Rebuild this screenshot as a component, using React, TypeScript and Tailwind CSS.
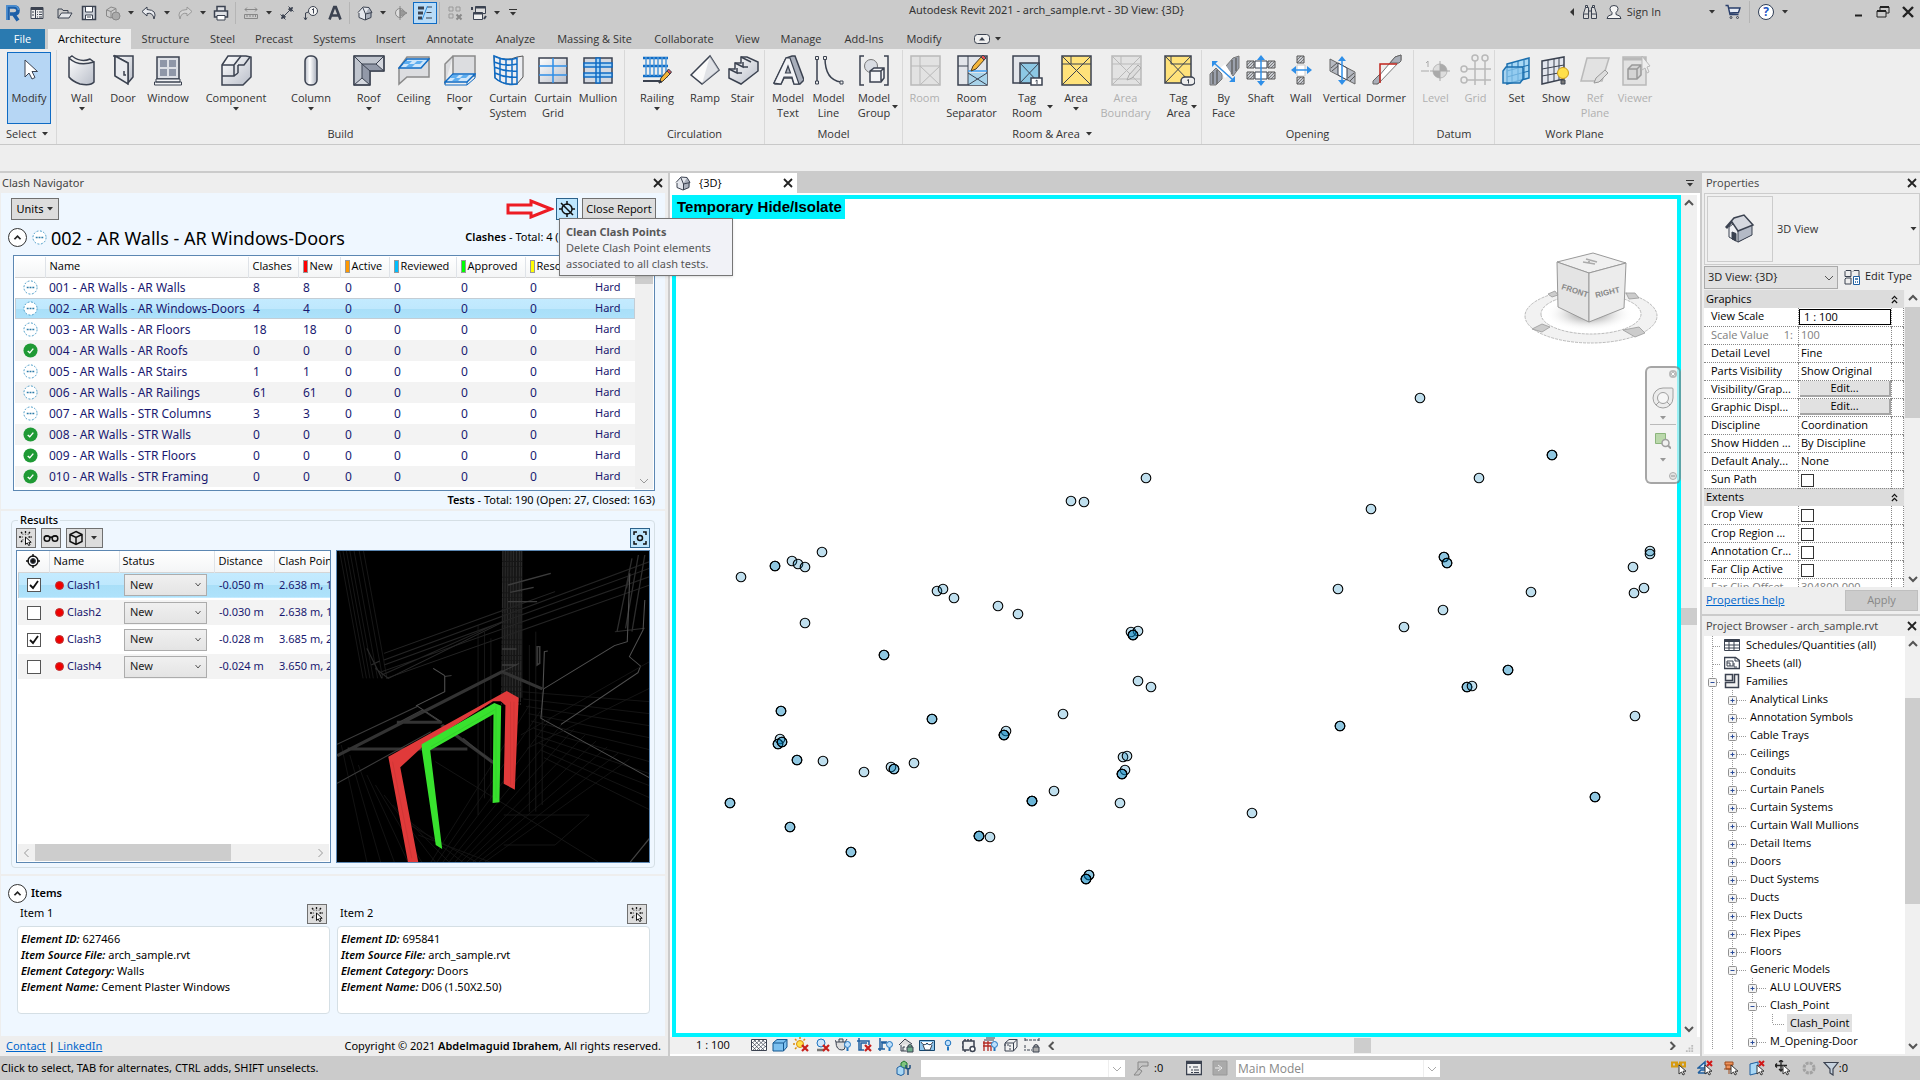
import { ReactNode } from 'react';
import clsx from 'clsx';

const D = '#3b4250';
const B = '#0f6bc4';
const G = '#b9b9b9';

// ---------- shared bits ----------

function Svg({ s = 16, cls, children }: { s?: number; cls?: string; children: ReactNode }) {
  return (
    <svg viewBox={`0 0 ${s} ${s}`} width={s} height={s} fill="none" stroke={D} className={clsx('shrink-0', cls)} aria-hidden="true">
      {children}
    </svg>
  );
}

function Caret({ cls }: { cls?: string }) {
  return (
    <svg viewBox="0 0 6 4" className={clsx('w-[6px] h-1 shrink-0', cls)} aria-hidden="true">
      <path d="M0 0h6L3 3.6z" fill="#333" />
    </svg>
  );
}

const CHEVRONS = { up: 'M1 6l4-4 4 4', down: 'M1 3l4 4 4-4', left: 'M6.500 1l-4 4 4 4', right: 'M3.500 1l4 4-4 4' };

function Chevron({ dir, color = '#555', w = 2 }: { dir: keyof typeof CHEVRONS; color?: string; w?: number }) {
  return (
    <svg viewBox="0 0 10 9" className="w-[10px] h-[9px] shrink-0" fill="none" stroke={color} strokeWidth={w} aria-hidden="true">
      <path d={CHEVRONS[dir]} />
    </svg>
  );
}

function CloseX() {
  return (
    <button aria-label="Close" className="flex items-center justify-center w-4 h-4">
      <svg viewBox="0 0 10 10" className="w-[10px] h-[10px]" stroke="#222" strokeWidth="1.800"><path d="M1 1l8 8M9 1L1 9" /></svg>
    </button>
  );
}

// ---------- title bar ----------

const houseSmall = (
  <>
    <path d="M2 6.500L6 2l6 .5 3 5-1 5-6 2.500-6-2.500z" fill="#e4e7ed" stroke="none" />
    <path d="M8.500 8.500L12 2.500l3 5-1 5-5.500 2.500z" fill="#aab0bc" stroke="none" />
    <path d="M1 7.500L6 2l6 .5 3 5-6.500 1.500L6 3M2 8v4.500l6 2.500 6-2.500V8M8.500 9v6" />
  </>
);

const QAT_ICONS: Record<string, ReactNode> = {
  app: (
    <Svg s={20}>
      <path d="M5 17V4h6q4 0 4 3.500T11 11H7M10.500 11l4.500 6.500" stroke="#1d5fa8" strokeWidth="3.600" />
      <path d="M4 17V3h7q4 0 4.500 4" stroke="#4f93d6" strokeWidth="1.500" />
    </Svg>
  ),
  ui: <Svg><path d="M2 2.500h12v11H2z" fill="#eee" /><path d="M2 4h12" strokeWidth="2" /><path d="M6.500 4v9M8 7h1M10 7h3M8 9.500h1M10 9.500h3M8 12h1M10 12h3M3 7h2M3 10h2" /></Svg>,
  open: <Svg><path d="M1 13V4h4l1 1.500h5V8" /><path d="M1 13l3.500-5H15l-3 5z" fill="#e4e6ea" /></Svg>,
  save: <Svg><path d="M1.500 1.500h13v13h-13z" fill="#cfd3da" strokeWidth="1.500" /><path d="M4.500 2v5h7V2" fill="#fff" /><path d="M4.500 14v-4h7v4" fill="#fff" /><path d="M6 12h4" /></Svg>,
  sync: <Svg><path d="M1.500 5L6 2l5 1.500v6L6 13l-4.500-2zM1.500 5L6 6.500l5-3M6 6.500V13" stroke="#888" fill="#ccc" /><circle cx="11" cy="11" r="4" stroke="#888" fill="#aaa" /></Svg>,
  undo: <Svg><path d="M6 2L1 6.500 6 11V8.500q6-1.500 7 5.500 4-9-7-9.500z" fill="#e9ebef" /></Svg>,
  redo: <Svg><path d="M10 2l5 4.500-5 4.500V8.500Q4 7 3 14q-4-9 7-9.500z" stroke="#999" fill="#d4d4d4" /></Svg>,
  print: <Svg><path d="M4 6V1.500h8V6M1.500 6h13v6h-13z" fill="#dfe1e5" strokeWidth="1.500" /><path d="M4 10.500h8v4.500H4z" fill="#fff" /></Svg>,
  measure: <Svg><path d="M2 4.500h12M4 2.500l-2 2 2 2M12 2.500l2 2-2 2M1.500 9.500h13v4h-13zM4 10v2M7 10v2M10 10v2M12.500 10v2" stroke="#888" /></Svg>,
  dim: <Svg><path d="M3 13L13 3M1.500 9.500l5 5M9.500 1.500l5 5" /><path d="M2.500 13.500l1.500-4 2.500 2.500zM13.500 2.500L9.500 4 12 6.500z" fill={D} /></Svg>,
  tag: <Svg><circle cx="10" cy="6" r="4.500" fill="#f4f4f4" /><path d="M5.500 7l-3 1v6M1 12.500L2.500 15 4 12.500M9 5l1.500-1.500v5" /></Svg>,
  text: <Svg><path d="M2.500 14.500L7.200 2h1.600l4.700 12.500M4.500 10.500h7" strokeWidth="2.600" /></Svg>,
  house: <Svg>{houseSmall}</Svg>,
  section: <Svg><circle cx="7" cy="8" r="4.500" stroke="#888" fill="#ddd" /><path d="M7 1v14M7 4.500l7 3.500-7 3.500z" stroke="#888" fill="#999" /></Svg>,
  thin: <Svg><path d="M1 3h6M1 8h5M1 13h4" strokeWidth="3" /><path d="M10 2h5M9.500 7.500h5M9 13h6" strokeWidth="1" /><path d="M10.500 1L5 15" stroke="#2f8fdf" /></Svg>,
  hidden: <Svg><path d="M2 2h4v4H2zM9 2h4v4H9zM2 9h4v4H2z" stroke="#999" /><path d="M9.500 9.500l5 5M14.500 9.500l-5 5" stroke="#888" strokeWidth="2" /></Svg>,
  windows: <Svg><path d="M4.500 1.500h10v7h-10z" fill="#ddd" /><path d="M4.500 2.500h10" strokeWidth="2" /><path d="M2.500 7.500h9v7h-9z" fill="#eee" /><path d="M2.500 8.500h9M1 5V2M13 14l2-3" strokeWidth="2" /></Svg>,
};

const QAT = ['app', 'ui', '', 'open', 'save', 'sync', 'v', 'undo', 'v', 'redo', 'v', 'print', '|', 'measure', 'v', 'dim', 'tag', 'text', '|', 'house', 'v', 'section', 'thin', '|', 'hidden', 'windows', 'v'];

function TitleBar() {
  return (
    <header className="flex h-[29px] bg-[#cbcbcb]">
      <div className="flex h-6 items-center pl-px pt-px">
        {QAT.map((name, i) => {
          if (name === '') return <span key={i} className="w-1" />;
          if (name === '|') return <span key={i} className="mx-[2px] h-[22px] w-[2px] border-l border-[#b5b5b5]" />;
          if (name === 'v') return <button key={i} aria-label="More" className="flex w-3 justify-center"><Caret cls="w-[5px]" /></button>;
          return (
            <button key={i} aria-label={name} className={clsx('flex h-[22px] w-6 items-center justify-center', name === 'thin' && 'border border-[#0f6bc4] bg-[#b9dcf8]')}>
              {QAT_ICONS[name]}
            </button>
          );
        })}
        <button aria-label="Customize" className="flex w-5 flex-col items-center gap-[2px]">
          <span className="h-px w-2 bg-[#333]" /><Caret cls="w-2" />
        </button>
      </div>
      <h1 className="flex-1 pt-[2px] text-center font-['Noto_Sans',sans-serif] text-[11px] leading-4 text-[#333]">Autodesk Revit 2021 - arch_sample.rvt - 3D View: {'{3D}'}</h1>
      <div className="flex h-6 items-center text-[11px] text-[#333]">
        <svg viewBox="0 0 4 8" className="w-1 h-2 mr-2"><path d="M4 0v8L0 4z" fill="#333" /></svg>
        <button aria-label="Search" className="w-6"><Svg><path d="M1.500 14.500v-5l2-6h3v11zM9.500 14.500v-11h3l2 6v5zM6.500 7h3M3.500 3.500v-2h2v2M10.500 3.500v-2h2v2M1.500 10h5M9.500 10h5" fill="#ddd" /></Svg></button>
        <button className="flex items-center gap-[5px]">
          <Svg><path d="M1 14.500q0-3 5-4V8.500Q4 7 4 4.500 4 1.500 8 1.500t4 3Q12 7 10 8.500v2q5 1 5 4z" fill="#f5f5f5" /></Svg>
          Sign In
        </button>
        <Caret cls="w-[5px] ml-12 mr-[10px]" />
        <button aria-label="Store"><Svg><path d="M3.500 4H15l-1.500 4.500-9 .5z" fill="#e6ebf4" stroke="none" /><path d="M.5 1.500H3l2 9h8.500M3.500 4H15l-1.500 4.500-9 .5" stroke="#2a3f6b" strokeWidth="1.400" /><circle cx="6" cy="13.500" r="1" /><circle cx="12.500" cy="13.500" r="1" /></Svg></button>
        <span className="mx-2 h-[22px] w-px bg-[#b5b5b5]" />
        <button aria-label="Help" className="flex h-4 w-4 items-center justify-center rounded-full border border-[#2f3d55] bg-white text-xs font-bold text-[#1f56c4]">?</button>
        <Caret cls="w-[5px] ml-2" />
        <div className="ml-[66px] flex items-center gap-3 pr-[6px]">
          <button aria-label="Minimize"><Svg s={10}><path d="M1 8.500h7" stroke="#222" strokeWidth="2" /></Svg></button>
          <button aria-label="Restore"><Svg s={14}><path d="M4 5V2h9v6h-3M1 6h9v6H1z" stroke="#222" /><path d="M4 2h9M1 6h9" stroke="#222" strokeWidth="2" /></Svg></button>
          <button aria-label="Exit"><Svg s={12}><path d="M1 1l10 10M11 1L1 11" stroke="#222" strokeWidth="2.400" /></Svg></button>
        </div>
      </div>
    </header>
  );
}

// ---------- ribbon ----------

const TABS: [string, string][] = [
  ['Structure', 'w-[69px]'], ['Steel', 'w-[45px]'], ['Precast', 'w-[58px]'], ['Systems', 'w-[63px]'], ['Insert', 'w-[49px]'],
  ['Annotate', 'w-[70px]'], ['Analyze', 'w-[61px]'], ['Massing & Site', 'w-[97px]'], ['Collaborate', 'w-[82px]'], ['View', 'w-[45px]'],
  ['Manage', 'w-[62px]'], ['Add-Ins', 'w-[64px]'], ['Modify', 'w-[56px]'],
];

const pencil = (
  <>
    <path d="M18 29l2-5 7-8 3 3-8 8z" fill="#f5b63a" stroke="#4a3a20" />
    <path d="M26 17l1.500-2 3 3-1.500 2z" fill="#e05050" /><path d="M18 29l1-3 2 2z" fill="#222" />
  </>
);

const hatch = (x: number, y: number, c = '#555') => (
  <>
    <path d={`M${x} ${y}h7v7h-7z`} fill="#c9ccd2" stroke={c} />
    <path d={`M${x} ${y + 4}l4-4M${x} ${y + 7}l7-7M${x + 3} ${y + 7}l4-4`} stroke={c} strokeWidth=".7" />
  </>
);

const R_ICONS: Record<string, ReactNode> = {
  modify: <path d="M12 6v17l4-4 3 6 3-1.500-3-6h5.500z" fill="#fff" />,
  wall: <path d="M3 4q9 9 25 4v20q-3 4-14 2Q6 27 3 23zM3 4l3-2q9 7 18 3l4 3" fill="url(#steel)" strokeWidth="1.500" />,
  door: <><path d="M6 2h20v21l-5 6V9L8 2v19l13 8" fill="url(#steel)" strokeWidth="1.500" /><path d="M8 2l13 7v21L8 22z" fill="#e9ebef" strokeWidth="1.500" /><path d="M17 17v4h2" strokeWidth="1.500" /></>,
  window: <><path d="M5 3h22v22H5z" fill="#dde0e6" strokeWidth="1.500" /><path d="M8 6h7v7H8zM17 6h7v7h-7zM8 15h7v7H8zM17 15h7v7h-7z" fill="#8f97a8" stroke="none" /><path d="M2.500 28h27v3h-27zM4 25h24v3H4z" fill="#f2f3f6" /></>,
  component: <><path d="M2 11l6-9h18l5 1v20l-8 8H2z" fill="url(#steel)" strokeWidth="1.500" /><path d="M2 22h12V11H2M14 11l7-9M14 22l4-3M18 11h6l6-8M18 11v8" strokeWidth="1.500" /></>,
  column: <rect x="10" y="2" width="12" height="29" rx="5" fill="url(#steelh)" strokeWidth="1.500" />,
  roof: <><path d="M1 2h30v15H17v14H1z" fill="#d5d8df" /><path d="M1 2h30L23 10H9zM9 10v14l-8 7V2z" fill="#c0c5ce" stroke="none" /><path d="M9 10h14l8 7H17v14L9 24z" fill="#9299a8" stroke="none" /><path d="M1 2h30v15H17v14H1z" strokeWidth="1.500" /><path d="M1 2l8 8v14M9 10h14M9 24l-8 7M9 24l8 7M23 10l8-8M23 10l8 7M9 10l8 7" /></>,
  ceiling: <><path d="M9 3h22v20H9L1 30V14z" fill="#dcdde0" stroke="#8a8a8a" strokeWidth="1.500" /><path d="M9 5h22l-8 9H1z" fill="#cfe6fa" stroke={B} strokeWidth="1.500" /><path d="M8 7h6l-3 3H5zM19 7h6l-3 3h-6zM11 10h6l-3 3H8z" fill="#5eaef0" stroke="none" /></>,
  floor: <><path d="M9 2h22v20H9zM9 2L1 10v20" fill="#dcdde0" stroke="#8a8a8a" strokeWidth="1.500" /><path d="M9 20h22l-8 8H1z" fill="#cfe6fa" stroke={B} strokeWidth="1.500" /><path d="M1 28v3h22l8-7v-4M23 28v3" stroke={B} /><path d="M9 21h6l-3 3H6zM19 21h6l-3 3h-6zM11 24h6l-3 3H8z" fill="#5eaef0" stroke="none" /></>,
  curtainSystem: <><path d="M2 2q12 6 23 1l6-1v21l-6 7q-13 2-22-6z" fill="#eceef2" stroke="#555" /><path d="M2 2q12 6 23 2v26q-13 2-22-6zM2 8q12 5 23 2M2 13q12 5 23 4M3 19q10 5 22 4M8 4v23M14 6v23M20 6v24" stroke={B} strokeWidth="1.500" /></>,
  curtainGrid: <><path d="M2 4h28v25H2z" fill="url(#steel)" strokeWidth="1.500" /><path d="M16 4v25M2 12h28M2 21h28" stroke="#2f8fe8" strokeWidth="1.500" /></>,
  mullion: <><path d="M2 4h28v25H2z" fill="#d5d8df" strokeWidth="1.500" /><path d="M2 9h28v4H2zM2 19h28v4H2zM14 4h4v25h-4z" fill="#a5d3f5" stroke={B} strokeWidth="1.500" /></>,
  railing: <><path d="M2 4h25M2 12h25M2 22h25" stroke={B} strokeWidth="2.500" /><path d="M5 3v19M9 3v19M13 3v19M17 3v19M21 3v19M25 3v19" stroke="#4a97dc" strokeWidth="1.500" /><path d="M2 27h17" strokeWidth="2" />{pencil}</>,
  ramp: <><path d="M2 21L21 2l9 14-17 14z" fill="#fafafa" strokeWidth="1.500" /><path d="M21 2l9 14-17 14z" fill="#cfd2d9" fillOpacity=".6" stroke="none" /></>,
  stair: <><path d="M2 15h6v-6h6V3h6l11 5v9L14 30 2 24z" fill="url(#steel)" strokeWidth="1.500" /><path d="M2 15l8 4v-5M8 9l8 4v-5M14 3l10 5M10 19h5M16 13h5" strokeWidth="1.500" /></>,
  modelText: <><path d="M2 29L14 4l6-2h3l9 24-4 4h-6l-2-6h-8l-3 6H3z" fill="#a9afbb" strokeWidth="1.500" /><path d="M2 29L14 4h4l9 26h-5l-2-7h-8l-3 7zM13.500 19h5L16 12z" fill="#f2f3f6" strokeWidth="1.200" /></>,
  modelLine: <><path d="M4 4v24M12 4q0 22 16 24" strokeWidth="1.500" /><path d="M2.500 2.500h3v3h-3zM2.500 27h3v3h-3zM10.500 2.500h3v3h-3zM27 27h3v3h-3z" fill="#eee" /></>,
  modelGroup: <><path d="M6 2H2v29h4M26 2h4v29h-4" strokeWidth="1.500" /><circle cx="13" cy="12" r="6.500" fill="#d9dce2" stroke="#777" /><path d="M12 17l4-3h10v10l-3 4H12zM12 17h11v10M23 17l3-3" fill="#f2f3f6" strokeWidth="1.500" /></>,
  room: <><path d="M2 2h29v29H2z" fill="#e2e2e2" stroke={G} strokeWidth="1.500" /><path d="M11 2v29M2 12h9M11 12h20M11 12l20 19M31 12L11 31" stroke={G} /></>,
  roomSep: <><path d="M2 2h29v29H2z" fill="#e2e5ea" strokeWidth="1.500" /><path d="M12 19h19v12H12z" fill="#a8d3ea" stroke="none" /><path d="M12 2v29M2 12h10M12 19l19 12M31 19L12 31" /><path d="M12 17h19" stroke="#3d9cf0" strokeWidth="1.500" /><path d="M15 17l2-5 9-10 3 3-9 10z" fill="#f5b63a" stroke="#4a3a20" /><path d="M25 3l2-2 3 3-2 2z" fill="#e05050" /></>,
  tagRoom: <><path d="M2 2h26v27H2z" fill="#e2e5ea" strokeWidth="1.500" /><path d="M9 9h19v20H9z" fill="#8cc8e4" strokeWidth="1.500" /><path d="M9 9l19 20M28 9L9 29" /><path d="M20 24h11v7H20z" fill="#fff" strokeWidth="1.500" /><path d="M24.500 27l1.500-1v4" /></>,
  area: <><path d="M2 2h29v29H2z" fill="#ffe27a" strokeWidth="1.500" /><path d="M2 2l29 29M31 2L2 31M2 10h29M11 2v8" /></>,
  areaBoundary: <><path d="M2 2h29v29H2z" fill="#e2e2e2" stroke={G} strokeWidth="1.500" /><path d="M2 2l29 29M31 2L2 31M2 10h29M11 2v8M2 25h29" stroke={G} /><path d="M17 26l2-5 9-10 3 3-9 10z" fill="#ddd" stroke="#aaa" /></>,
  tagArea: <><path d="M2 2h26v27H2z" fill="#ffe27a" strokeWidth="1.500" /><path d="M2 2l26 27M28 2L2 29M8 2v8h20" /><rect x="18" y="23" width="14" height="8" rx="4" fill="#eee" strokeWidth="1.500" /><path d="M24 26.500l1.500-1v4" /></>,
  byFace: <><path d="M18 12L25 4l6-2v12l-6 8zM2 20l6-6 6 6v5L8 31H2z" fill="#9ba1ad" stroke="#777" /><path d="M5 18v12M9 16v14M24 6v14M28 4v13" stroke="#666" strokeWidth="1.500" /><path d="M11 15l6-5 6 9-6 5z" fill="#fff" stroke="none" /><path d="M5 8l20 18" stroke="#2f8fe8" strokeWidth="1.500" /><path d="M4 7h6l-6 6zM27 28v-6l-6 6z" fill="#2f8fe8" stroke="none" /></>,
  shaft: <><path d="M10 7h12v7H10zM10 18h12v7H10z" fill="#fff" />{hatch(2, 7)}{hatch(23, 7)}{hatch(2, 18)}{hatch(23, 18)}<path d="M16 3v27" stroke="#2f8fe8" strokeWidth="1.500" /><path d="M16 1l4 5h-8zM16 32l4-5h-8z" fill="#2f8fe8" stroke="none" /></>,
  openWall: <><path d="M12 11h8v11h-8z" fill="#fff" stroke="#ccc" />{hatch(12, 2)}{hatch(12, 23)}<path d="M8 16h17" stroke="#2f8fe8" strokeWidth="1.500" /><path d="M6 16l5-4v8zM27 16l-5-4v8z" fill="#2f8fe8" stroke="none" /></>,
  vertical: <><path d="M4 5l25 13v12L4 17z" fill="#b5b9c1" stroke="#666" /><path d="M12 9l9 5v12l-9-5z" fill="#fff" /><path d="M5 14l6-5M6 17l6-5M22 24l6-5M24 27l5-5" stroke="#555" /><path d="M16 4v24" stroke="#2f8fe8" strokeWidth="1.500" /><path d="M16 2l4 5h-8zM16 31l4-5h-8z" fill="#2f8fe8" stroke="none" /></>,
  dormer: <><path d="M3 29L25 3l6-2v5L8 30z" fill="#fff" stroke="#777" /><path d="M25 3l6-2v6l-2 2h-9zM3 27l7-7v8l-3 2H3z" fill="#a9aeb8" stroke="#666" /><path d="M10 29V10h17" stroke="#c0241c" strokeWidth="1.500" /></>,
  level: <><circle cx="20" cy="17" r="7" fill="#ddd" stroke={G} /><path d="M20 17v-7a7 7 0 0 1 7 7zM20 17v7a7 7 0 0 1-7-7z" fill="#aaa" stroke="none" /><path d="M1 17h8M20 7v20M10 17h20M6 9l2-2v6" stroke="#aaa" /></>,
  grid: <g stroke={G} strokeWidth="1.500"><circle cx="4" cy="15" r="3" /><circle cx="4" cy="26" r="3" /><circle cx="15" cy="4" r="3" /><circle cx="25" cy="4" r="3" /><path d="M7 15h24M7 26h24M15 7v24M25 7v24" /></g>,
  set: <><path d="M6 10L28 4v20L6 30z" fill="#a9d8f5" stroke="#1b6fae" strokeWidth="1.500" /><path d="M11 9v20M17 7v20M23 6v20M6 17l22-6M6 23l22-6" stroke="#1b6fae" /><path d="M2 17l3-4h16l1 1v11l-3 4H2z" fill="#8cc8ee" fillOpacity=".7" stroke="#1b6fae" strokeWidth="1.500" /></>,
  show: <><path d="M2 7l22-4v22L2 30z" fill="#e3e6ee" strokeWidth="1.500" /><path d="M8 6v23M14 5v22M19 4v22M2 15l22-4M2 22l22-4" /><circle cx="23" cy="19" r="5.500" fill="#ffe04a" stroke="#c99a1a" /><path d="M21 26h4v4h-4z" fill="#777" /></>,
  refPlane: <><path d="M8 4h22l-7 23H2z" fill="#e2e2e2" stroke={G} strokeWidth="1.500" /><path d="M15 29l2-5 9-8 3 3-9 9z" fill="#ddd" stroke="#999" /></>,
  viewer: <><path d="M4 3h23v28H4z" fill="#e2e2e2" stroke={G} strokeWidth="1.500" /><path d="M4 5h23" stroke={G} strokeWidth="3" /><path d="M9 15l4-4h9v10l-4 4H9zM9 15h9v10M18 15l4-4" stroke="#999" fill="#d4d4d4" strokeWidth="1.500" /><path d="M23 2v14l3-2 2 5 2-1-2-5 3-1z" fill="#eee" stroke={G} /></>,
};

interface Tool { icon: string; label: string; w: string; menu?: 'below' | 'side'; off?: boolean }
interface Group { label: string; tools: Tool[]; more?: boolean }

const GROUPS: Group[] = [
  { label: 'Build', tools: [
    { icon: 'wall', label: 'Wall', w: 'w-[50px]', menu: 'below' },
    { icon: 'door', label: 'Door', w: 'w-[32px]' },
    { icon: 'window', label: 'Window', w: 'w-[58px]' },
    { icon: 'component', label: 'Component', w: 'w-[78px]', menu: 'below' },
    { icon: 'column', label: 'Column', w: 'w-[72px]', menu: 'below' },
    { icon: 'roof', label: 'Roof', w: 'w-[43px]', menu: 'below' },
    { icon: 'ceiling', label: 'Ceiling', w: 'w-[47px]' },
    { icon: 'floor', label: 'Floor', w: 'w-[45px]', menu: 'below' },
    { icon: 'curtainSystem', label: 'Curtain\nSystem', w: 'w-[52px]' },
    { icon: 'curtainGrid', label: 'Curtain\nGrid', w: 'w-[38px]' },
    { icon: 'mullion', label: 'Mullion', w: 'w-[52px]' },
  ] },
  { label: 'Circulation', tools: [
    { icon: 'railing', label: 'Railing', w: 'w-[64px]', menu: 'below' },
    { icon: 'ramp', label: 'Ramp', w: 'w-[32px]' },
    { icon: 'stair', label: 'Stair', w: 'w-[43px]' },
  ] },
  { label: 'Model', tools: [
    { icon: 'modelText', label: 'Model\nText', w: 'w-[46px]' },
    { icon: 'modelLine', label: 'Model\nLine', w: 'w-[35px]' },
    { icon: 'modelGroup', label: 'Model\nGroup', w: 'w-[56px]', menu: 'side' },
  ] },
  { label: 'Room & Area', more: true, tools: [
    { icon: 'room', label: 'Room', w: 'w-[43px]', off: true },
    { icon: 'roomSep', label: 'Room\nSeparator', w: 'w-[51px]' },
    { icon: 'tagRoom', label: 'Tag\nRoom', w: 'w-[60px]', menu: 'side' },
    { icon: 'area', label: 'Area', w: 'w-[38px]', menu: 'below' },
    { icon: 'areaBoundary', label: 'Area\nBoundary', w: 'w-[61px]', off: true },
    { icon: 'tagArea', label: 'Tag\nArea', w: 'w-[45px]', menu: 'side' },
  ] },
  { label: 'Opening', tools: [
    { icon: 'byFace', label: 'By\nFace', w: 'w-[43px]' },
    { icon: 'shaft', label: 'Shaft', w: 'w-[32px]' },
    { icon: 'openWall', label: 'Wall', w: 'w-[48px]' },
    { icon: 'vertical', label: 'Vertical', w: 'w-[34px]' },
    { icon: 'dormer', label: 'Dormer', w: 'w-[54px]' },
  ] },
  { label: 'Datum', tools: [
    { icon: 'level', label: 'Level', w: 'w-[43px]', off: true },
    { icon: 'grid', label: 'Grid', w: 'w-[37px]', off: true },
  ] },
  { label: 'Work Plane', tools: [
    { icon: 'set', label: 'Set', w: 'w-[43px]' },
    { icon: 'show', label: 'Show', w: 'w-[36px]' },
    { icon: 'refPlane', label: 'Ref\nPlane', w: 'w-[42px]', off: true },
    { icon: 'viewer', label: 'Viewer', w: 'w-[38px]', off: true },
  ] },
];

function RibbonTool({ icon, label, w, menu, off }: Tool) {
  return (
    <button disabled={off} className={clsx('relative flex h-[72px] flex-col items-center pt-[2px]', w, off ? 'text-[#b0b0b0]' : 'text-[#333]')}>
      <Svg s={32}>{R_ICONS[icon]}</Svg>
      <span className="mt-1 whitespace-pre text-center text-[11px] leading-[15px]">{label}</span>
      {menu === 'below' && <Caret cls="w-[5px] mt-[2px]" />}
      {menu === 'side' && <Caret cls="w-[5px] absolute right-1 top-[53px]" />}
    </button>
  );
}

function Ribbon() {
  return (
    <>
      <nav className="flex h-5 bg-[#cbcbcb] text-[11px] leading-5 text-[#333]">
        <button className="w-[45px] bg-[#2a7ab0] text-white">File</button>
        <button className="ml-[3px] w-[83px] bg-[#eee] text-black">Architecture</button>
        {TABS.map(([label, w]) => <button key={label} className={clsx('whitespace-nowrap', w)}>{label}</button>)}
        <button aria-label="Ribbon display" className="ml-[22px] flex items-center gap-[5px]">
          <svg viewBox="0 0 16 10" className="w-4 h-[10px]"><rect x=".5" y=".5" width="15" height="9" rx="3" fill="#eee" stroke={D} /><path d="M5 6.500h6L8 3z" fill={D} /></svg>
          <Caret />
        </button>
      </nav>
      <div className="flex h-24 border-b border-[#c8c8c8] bg-[#eee] pt-px">
        <div className="flex w-[57px] flex-col border-r border-[#d8d8d8]">
          <button className="ml-[7px] mt-[2px] flex h-[72px] w-[44px] flex-col items-center border border-[#0f6bc4] bg-[#b6d6f4] text-[11px] leading-[15px] text-[#333]">
            <Svg s={32} cls="mt-px">{R_ICONS.modify}</Svg>
            <span className="mt-1">Modify</span>
          </button>
          <button className="mt-px flex items-center gap-[6px] pl-[6px] text-[11px] leading-[17px] text-[#333]">Select <Caret cls="w-2" /></button>
        </div>
        {GROUPS.map(g => (
          <section key={g.label} className="flex flex-col border-r border-[#d8d8d8] last:border-0">
            <div className="flex h-[75px] pt-[2px]">{g.tools.map(t => <RibbonTool key={t.label} {...t} />)}</div>
            <h2 className="flex items-center justify-center gap-[6px] text-[11px] leading-[17px] text-[#333]">{g.label}{g.more && <Caret cls="w-2" />}</h2>
          </section>
        ))}
      </div>
      <div className="h-[28px] border-b-2 border-[#cbcbcb] bg-[#eee]" />
    </>
  );
}

// ---------- clash navigator ----------

interface Test { name: string; clashes: number; done?: boolean; selected?: boolean }

const TESTS: Test[] = [
  { name: '001 - AR Walls - AR Walls', clashes: 8 },
  { name: '002 - AR Walls - AR Windows-Doors', clashes: 4, selected: true },
  { name: '003 - AR Walls - AR Floors', clashes: 18 },
  { name: '004 - AR Walls - AR Roofs', clashes: 0, done: true },
  { name: '005 - AR Walls - AR Stairs', clashes: 1 },
  { name: '006 - AR Walls - AR Railings', clashes: 61 },
  { name: '007 - AR Walls - STR Columns', clashes: 3 },
  { name: '008 - AR Walls - STR Walls', clashes: 0, done: true },
  { name: '009 - AR Walls - STR Floors', clashes: 0, done: true },
  { name: '010 - AR Walls - STR Framing', clashes: 0, done: true },
];

const STATUS_COLS: [string, string, string][] = [
  ['New', 'bg-[#ff0000]', 'w-[42px]'],
  ['Active', 'bg-[#ff9900]', 'w-[49px]'],
  ['Reviewed', 'bg-[#00bfff]', 'w-[67px]'],
  ['Approved', 'bg-[#00ff00]', 'w-[69px]'],
  ['Resolved', 'bg-[#ffff00]', 'w-[66px]'],
];

const RESULTS = [
  { name: 'Clash1', distance: '-0.050 m', point: '2.638 m, 1', on: true, selected: true },
  { name: 'Clash2', distance: '-0.030 m', point: '2.638 m, 1', on: false },
  { name: 'Clash3', distance: '-0.028 m', point: '3.685 m, 2', on: true },
  { name: 'Clash4', distance: '-0.024 m', point: '3.650 m, 2', on: false },
];

const SELECTED_ROW = 'bg-[linear-gradient(#c4ebff_0%,#bfe8fd_50%,#a9dff8_51%,#aee2fb_100%)] shadow-[inset_0_0_0_1px_#c3cdd5]';
const GRAY_BTN = 'flex items-center justify-center border border-[#707070] bg-[#ddd]';
const BLUE_BTN = 'flex items-center justify-center border border-[#2c628b] bg-[#bee6fd]';

function StatusDot({ done }: { done?: boolean }) {
  return (
    <svg viewBox="0 0 16 16" className="w-[15px] h-[15px]" fill="none" aria-hidden="true">
      {done ? (
        <><circle cx="8" cy="8" r="7.500" fill="#1f9a35" /><path d="M5 8.500l2.200 2L11 6" stroke="#fff" strokeWidth="1.500" /></>
      ) : (
        <><circle cx="8" cy="8" r="7" fill="#fff" stroke="#3c93c2" strokeDasharray="2 1.700" /><path d="M4 8h2M7 8h2M10 8h2" stroke="#2c7ba8" strokeWidth="1.400" /></>
      )}
    </svg>
  );
}

function Expander() {
  return (
    <button aria-label="Collapse" className="flex h-[19px] w-[19px] items-center justify-center rounded-full border border-[#333] bg-white">
      <svg viewBox="0 0 10 8" className="w-[9px] h-[7px]" fill="none" stroke="#222" strokeWidth="2"><path d="M1.500 6L5 2.500 8.500 6" /></svg>
    </button>
  );
}

function PickIcon() {
  return (
    <Svg><path d="M7.500 7v7.500l1.800-1.600 1.300 2.600 1.500-.7-1.300-2.500h2.400z" fill="#fff" stroke="#111" /><path d="M7.500 1v3.500M3 2l2.200 2.500M1 7h3.500M12 2L9.800 4.500M10.500 7H14M3 12l2.200-2.500" stroke="#111" strokeWidth="1.300" strokeDasharray="2 .8" /></Svg>
  );
}

function TestsTable() {
  return (
    <div className="ml-3 mr-[10px] flex h-[236px] border border-[#5c87b2] bg-white p-px">
      <table className="w-[621px] table-fixed self-start border-collapse text-xs">
        <thead className="bg-linear-to-b from-white to-[#f4f5f6] font-['Open_Sans',sans-serif] text-[11px]">
          <tr className="h-[20px] border-b border-[#d5d5d5] text-left text-black">
            <th className="w-[30px]"></th>
            <th className="w-[203px] border-x border-[#dfe3e8] pl-1 font-normal">Name</th>
            <th className="w-[50px] border-r border-[#dfe3e8] pl-1 font-normal">Clashes</th>
            {STATUS_COLS.map(([label, color, w]) => (
              <th key={label} className={clsx('border-r border-[#dfe3e8] pl-1 font-normal', w)}>
                <span className="flex items-center gap-[2px]"><i className={clsx('h-[13px] w-[5px] border border-[#999]', color)} />{label}</span>
              </th>
            ))}
            <th className="w-[44px] pl-1 font-normal">Type</th>
          </tr>
        </thead>
        <tbody className="text-[#191970]">
          {TESTS.map((t, i) => (
            <tr key={t.name} className={clsx('h-[21px]', t.selected ? SELECTED_ROW : i % 2 ? 'bg-[#f3f3f3]' : 'bg-white')}>
              <td className="p-0 pl-2"><StatusDot done={t.done} /></td>
              <td className="whitespace-nowrap p-0 pl-1">{t.name}</td>
              <td className="p-0 pl-[5px]">{t.clashes}</td>
              <td className="p-0 pl-[5px]">{t.clashes}</td>
              <td className="p-0 pl-[5px]">0</td>
              <td className="p-0 pl-[5px]">0</td>
              <td className="p-0 pl-[5px]">0</td>
              <td className="p-0 pl-[5px]">0</td>
              <td className="p-0 pl-1 text-[11px]">Hard</td>
            </tr>
          ))}
        </tbody>
      </table>
      <div className="ml-auto flex w-[18px] flex-col items-center justify-between bg-[#f0f0f0] pb-1">
        <span className="h-[27px] w-full bg-[#cdcdcd]" />
        <Chevron dir="down" color="#999" w={1} />
      </div>
    </div>
  );
}

function ResultsList() {
  return (
    <div className="flex flex-1 flex-col overflow-hidden border border-[#5c87b2] bg-white pb-px">
      <div className="flex-1 overflow-hidden pl-px">
        <table className="w-[355px] table-fixed border-collapse text-[11px]">
          <thead className="bg-linear-to-b from-white to-[#f4f5f6] font-['Open_Sans',sans-serif]">
            <tr className="h-[21px] border-b border-[#d5d5d5] text-left text-black">
              <th className="w-[31px] pl-[7px]">
                <Svg><circle cx="8" cy="8" r="5" stroke="#111" strokeWidth="1.400" /><circle cx="8" cy="8" r="2.500" fill="#111" /><path d="M8 1v3M8 12v3M1 8h3M12 8h3" stroke="#111" strokeWidth="1.400" /></Svg>
              </th>
              <th className="w-[70px] border-x border-[#dfe3e8] pl-1 font-normal">Name</th>
              <th className="w-[95px] border-r border-[#dfe3e8] pl-[3px] font-normal">Status</th>
              <th className="w-[60px] border-r border-[#dfe3e8] pl-1 font-normal">Distance</th>
              <th className="pl-1 font-normal">Clash Point</th>
            </tr>
          </thead>
          <tbody className="text-[#191970]">
            {RESULTS.map((r, i) => (
              <tr key={r.name} className={clsx('h-[27px] border-b-2 border-white', r.selected ? SELECTED_ROW : i % 2 ? 'bg-[#f3f3f3]' : 'bg-white')}>
                <td className="pl-[9px]">
                  <label className="relative block h-[14px] w-[14px]">
                    <input type="checkbox" defaultChecked={r.on} aria-label={`Show ${r.name}`} className="peer block h-[14px] w-[14px] appearance-none border border-[#555] bg-white" />
                    <svg viewBox="0 0 14 14" className="pointer-events-none absolute inset-0 hidden peer-checked:block" fill="none" stroke="#111" strokeWidth="1.800"><path d="M3 7l3 3 5-7" /></svg>
                  </label>
                </td>
                <td className="pl-[6px]"><span className="flex items-center gap-[3px]"><i className="h-[9px] w-[9px] rounded-full border border-[#b33] bg-[#f00000]" />{r.name}</span></td>
                <td className="pl-[5px]">
                  <span className="relative block w-[83px]">
                    <select aria-label={`Status of ${r.name}`} className="block h-[22px] w-full appearance-none border border-[#acacac] bg-linear-to-b from-[#f0f0f0] to-[#e4e4e4] pl-[5px] text-[11px] text-[#222]"><option>New</option></select>
                    <svg viewBox="0 0 6 5" className="absolute right-[6px] top-2 w-[6px] h-[5px]" fill="none" stroke="#555"><path d="M.5 1L3 4l2.500-3" /></svg>
                  </span>
                </td>
                <td className="whitespace-nowrap pl-[5px]">{r.distance}</td>
                <td className="whitespace-nowrap pl-[5px]">{r.point}</td>
              </tr>
            ))}
          </tbody>
        </table>
      </div>
      <div className="mx-px flex h-[17px] items-center bg-[#f0f0f0]">
        <span className="flex w-[17px] justify-center"><Chevron dir="left" color="#999" w={1} /></span>
        <span className="h-full w-[196px] bg-[#cdcdcd]" />
        <span className="ml-auto flex w-[17px] justify-center"><Chevron dir="right" color="#999" w={1} /></span>
      </div>
    </div>
  );
}

// Wireframe preview of the selected clash
function ClashPreview() {
  const columns = [1178, 1184, 1190, 1197, 1203, 1210, 1217, 1222];
  const frames = [796, 804, 812, 820, 830, 842, 852];
  const fan = [0, 1, 2, 3, 4, 5, 6, 7, 8, 9];
  return (
    <svg viewBox="790 138 731 933" preserveAspectRatio="none" className="h-full w-full bg-black" fill="none" role="img" aria-label="Clash preview">
      <path d="M1176 138h48v440h-48z" fill="#161616" />
      {columns.map(x => <path key={x} d={`M${x} 138L${x - 3} 600`} stroke="#323232" strokeWidth="2" strokeDasharray="30 3 12 2" />)}
      {frames.map(x => <path key={x} d={`M${x} 138L${x + 55} 520`} stroke="#1e1e1e" strokeWidth="2" />)}
      {fan.map(i => <path key={i} d={`M${800 + i * 20} ${720 + i * 30}l${60 + i * 12} ${351 - i * 30}`} stroke="#181818" strokeWidth="2" />)}
      {fan.map(i => <path key={i} d={`M${1010 + i * 14} 1071L${1240 + i * 26} ${600 + i * 18}`} stroke="#181818" strokeWidth="2" />)}
      {fan.map(i => <path key={i} d={`M${1220 + i * 6} ${560 + i * 22}L1521 ${590 + i * 36}`} stroke="#1a1a1a" strokeWidth="2" />)}
      <path d="M900 480L1521 190M895 500L1521 215M905 520L1521 240M900 445L1300 260M895 510L1176 350M900 465L1521 170" stroke="#242424" strokeWidth="3" />
      <path d="M880 490l30 30 270-170M870 480l20-12M860 430l35 90" stroke="#2a2a2a" strokeWidth="3" />
      <path d="M1190 290h68M1195 262l55-15M1190 240l100-35M1176 432h34M1176 480h34M1258 425v55l6-5v-50z" stroke="#3c3c3c" strokeWidth="4" />
      <path d="M1120 360v570M1135 380v500M1150 400v490M1240 420v500M1255 380v540M1270 560v340" stroke="#1e1e1e" strokeWidth="2" />
      <path d="M1480 160l-35 220M1495 150l-30 220M1510 150l-30 230M1440 380l70-10M1475 210l-8 40" stroke="#2e2e2e" strokeWidth="3" />
      <path d="M1510 285l-4 90-32 80 26 28-6 20-180 155M1475 205l-6 205-30 12-166 130-6 88 254 178M1283 438l-8 2-3 110M1015 490l27 22M1058 512l-16 2v46l-66 42 60 50" stroke="#505050" strokeWidth="2.500" />
      <path d="M790 752L1176 500l95 52M815 732h280M930 652h105M1035 660l120 112" stroke="#333" strokeWidth="9" />
      <path d="M790 835L1010 680M790 718l190-115M1085 700l70 75M930 655l60-40 40 35M1176 500l40-25" stroke="#3c3c3c" strokeWidth="3" />
      <path d="M1220 690L1521 470M1235 730l286-180M1180 930h200l-80 90h-120M1020 770l380 300" stroke="#1a1a1a" strokeWidth="2" />
      <path d="M1521 1000l-45 71" stroke="#444" strokeWidth="3" />
      <path d="M910 755L1187 558l28 20-9 276-26-18 4-235-11-12-18 0-160 130-57 68 42 284h-24z" fill="#e03a3a" />
      <path d="M988 718L1158 594l16 8-4 290-16 2 2-266-148 108 28 296-15-12-32-280z" fill="#38e22e" />
      <path d="M1196 590v250M1204 590v250M920 770l45 290M1162 600v280M1010 725l150-112" stroke="#000" strokeOpacity=".18" />
    </svg>
  );
}

const ITEMS = [
  { title: 'Item 1', rows: [['Element ID:', '627466'], ['Item Source File:', 'arch_sample.rvt'], ['Element Category:', 'Walls'], ['Element Name:', 'Cement Plaster Windows']] },
  { title: 'Item 2', rows: [['Element ID:', '695841'], ['Item Source File:', 'arch_sample.rvt'], ['Element Category:', 'Doors'], ['Element Name:', 'D06 (1.50X2.50)']] },
];

function ClashNavigator() {
  return (
    <aside className="flex w-[670px] shrink-0 flex-col border-r-2 border-[#cbcbcb] bg-[#eee] font-['Noto_Sans',sans-serif] text-[11px] text-black">
      <div className="flex h-5 shrink-0 items-center justify-between pl-[2px] pr-[2px] text-[#444]">
        <h2>Clash Navigator</h2>
        <CloseX />
      </div>
      <div className="ml-px mr-[3px] flex flex-1 flex-col bg-[#eff7ff]">
        <div className="flex pl-[10px] pr-[9px] pt-[5px]">
          <button className={clsx(GRAY_BTN, 'h-[22px] w-12 gap-1')}>Units <Caret cls="w-2" /></button>
          <svg viewBox="0 0 48 20" className="ml-auto mr-[2px] h-5 w-12 self-center" fill="none" stroke="#ed1c24" strokeWidth="3"><path d="M2 6h23V2l20 8-20 8v-4H2z" /></svg>
          <div className="relative">
            <button aria-label="Clean Clash Points" className={clsx(BLUE_BTN, 'h-[22px] w-[22px]')}>
              <Svg><circle cx="8" cy="8" r="5" stroke="#111" strokeWidth="1.500" /><path d="M8 0v4M8 12v4M0 8h3M13 8h3M2 2l12 12" stroke="#111" strokeWidth="1.500" /></Svg>
            </button>
            <div role="tooltip" className="absolute left-[3px] top-5 z-20 h-[58px] w-[174px] border border-[#767676] bg-[#f1f2f7] px-[6px] pt-[5px] leading-4 text-[#575757] shadow-sm">
              <p className="font-bold">Clean Clash Points</p>
              <p className="whitespace-nowrap">Delete Clash Point elements</p>
              <p className="whitespace-nowrap">associated to all clash tests.</p>
            </div>
          </div>
          <button className={clsx(GRAY_BTN, "ml-1 h-[22px] w-[74px] whitespace-nowrap font-['Open_Sans',sans-serif]")}>Close Report</button>
        </div>
        <div className="flex h-[35px] items-center pl-[7px] pr-[10px]">
          <Expander />
          <span className="ml-[5px]"><StatusDot /></span>
          <h3 className="ml-1 whitespace-nowrap text-lg">002 - AR Walls - AR Windows-Doors</h3>
          <p className="ml-auto whitespace-nowrap"><span className="font-semibold">Clashes</span> - Total: 4 (Open: 4, Closed: 0)</p>
        </div>
        <TestsTable />
        <p className="h-[18px] pr-[10px] text-right leading-[18px]"><span className="font-semibold">Tests</span> - Total: 190 (Open: 27, Closed: 163)</p>
        <div className="h-[2px] bg-[#eee]" />
        <fieldset className="mx-[10px] mt-px flex flex-1 flex-col rounded-sm border border-[#d5dfe5] px-1 pb-1">
          <legend className="ml-[2px] px-[2px] font-medium leading-4">Results</legend>
          <div className="flex gap-[5px]">
            <button aria-label="Pick" className={clsx(GRAY_BTN, 'h-5 w-5')}><PickIcon /></button>
            <button aria-label="Inspect" className={clsx(GRAY_BTN, 'h-5 w-5')}>
              <Svg><circle cx="4" cy="8.500" r="2.800" stroke="#111" strokeWidth="1.500" /><circle cx="12" cy="8.500" r="2.800" stroke="#111" strokeWidth="1.500" /><path d="M1 7q3-2 7 .5Q12 5 15 7" stroke="#111" strokeWidth="1.500" /></Svg>
            </button>
            <span className="flex">
              <button aria-label="Box view" className={clsx(GRAY_BTN, 'h-5 w-5')}>
                <Svg><path d="M8 1.500l6 3v7l-6 3-6-3v-7zM2 4.500l6 3 6-3M8 7.500v7" stroke="#111" strokeWidth="1.500" /></Svg>
              </button>
              <button aria-label="Box options" className={clsx(GRAY_BTN, '-ml-px h-5 w-[18px]')}><Caret cls="w-2" /></button>
            </span>
            <button aria-label="Zoom to clash" className={clsx(BLUE_BTN, 'ml-auto h-5 w-5')}>
              <Svg><path d="M2 5V2h3M11 2h3v3M14 11v3h-3M5 14H2v-3" stroke="#111" strokeWidth="1.500" /><circle cx="8" cy="8" r="2.500" stroke="#111" strokeWidth="1.500" /></Svg>
            </button>
          </div>
          <div className="mt-[2px] flex flex-1 gap-[5px]">
            <ResultsList />
            <div className="relative flex-1 border border-[#5c87b2]">
              <div className="absolute inset-0"><ClashPreview /></div>
            </div>
          </div>
        </fieldset>
        <div className="mt-[6px] border-t-2 border-[#eee] pl-[7px] pt-2">
          <div className="flex items-center gap-1"><Expander /><h3 className="font-semibold">Items</h3></div>
        </div>
        <div className="mb-[22px] flex gap-[7px] pl-4 pr-[15px]">
          {ITEMS.map(item => (
            <section key={item.title} className="flex-1">
              <div className="flex h-[23px] items-center justify-between pb-[2px] pl-[3px] pr-[3px]">
                <h4>{item.title}</h4>
                <button aria-label={`Pick ${item.title}`} className={clsx(GRAY_BTN, 'h-5 w-5')}><PickIcon /></button>
              </div>
              <div className="h-[88px] rounded-sm border border-[#d5dfe5] bg-white px-[3px] pt-1 leading-4">
                {item.rows.map(([k, v]) => <p key={k}><span className="font-semibold italic">{k}</span> {v}</p>)}
              </div>
            </section>
          ))}
        </div>
      </div>
      <footer className="flex h-5 shrink-0 items-center justify-between pl-[6px] pr-[7px]">
        <p><a href="#contact" className="text-[#0066cc] underline">Contact</a> | <a href="#linkedin" className="text-[#0066cc] underline">LinkedIn</a></p>
        <p>Copyright © 2021 <span className="font-semibold">Abdelmaguid Ibrahem</span>, All rights reserved.</p>
      </footer>
    </aside>
  );
}

// ---------- 3D view ----------

// x, y, number of coincident points
const POINTS: [number, number, number][] = [
  [1146, 478, 1], [1071, 501, 1], [1084, 502, 1], [822, 552, 1], [775, 566, 2], [792, 561, 1], [798, 564, 1], [805, 567, 1],
  [741, 577, 1], [937, 591, 1], [943, 589, 1], [954, 598, 1], [998, 606, 1], [1018, 614, 1], [805, 623, 1], [1131, 632, 1],
  [1138, 631, 1], [1133, 635, 3], [884, 655, 2], [1138, 681, 1], [1151, 687, 1], [781, 711, 2], [932, 719, 2], [1063, 714, 1],
  [1006, 731, 1], [1004, 735, 3], [780, 739, 1], [778, 744, 2], [782, 742, 2], [797, 760, 2], [823, 761, 1], [864, 772, 1],
  [891, 767, 1], [894, 769, 2], [914, 763, 1], [1123, 757, 1], [1127, 756, 1], [1125, 770, 1], [1122, 774, 3], [1054, 791, 1],
  [1032, 801, 3], [1120, 803, 1], [730, 803, 2], [1252, 813, 1], [790, 827, 2], [979, 836, 3], [990, 837, 1], [851, 852, 2],
  [1089, 875, 2], [1086, 879, 3], [1420, 398, 1], [1552, 455, 2], [1479, 478, 1], [1371, 509, 1], [1444, 557, 2], [1447, 563, 2],
  [1650, 551, 1], [1650, 554, 1], [1633, 567, 1], [1338, 589, 1], [1531, 592, 1], [1634, 593, 1], [1644, 588, 1], [1443, 610, 1],
  [1404, 627, 1], [1508, 670, 2], [1467, 687, 2], [1472, 686, 1], [1635, 716, 1], [1340, 726, 2], [1595, 797, 2],
];

function ModelCanvas() {
  return (
    <svg viewBox="676 199 1001 834" preserveAspectRatio="xMinYMin meet" className="absolute inset-0 h-full w-full" role="img" aria-label="Clash points">
      <defs>
        <radialGradient id="cubeShadow"><stop offset="0" stopColor="#777" /><stop offset="1" stopColor="#fff" stopOpacity="0" /></radialGradient>
      </defs>
      {POINTS.flatMap(([x, y, n]) => Array.from({ length: n }, (_, i) => (
        <circle key={`${x}-${y}-${i}`} cx={x} cy={y} r="4.800" fill="#007fbb" fillOpacity=".25" stroke="#000" strokeWidth="1.100" />
      )))}
      <g stroke="#aaa" fill="#f2f2f2" strokeLinejoin="round">
        <path fillRule="evenodd" strokeDasharray="3 1" strokeWidth=".8" d="M1525 316a66 27 0 1 0 132 0a66 27 0 1 0-132 0zM1541 314a50 20 0 1 0 100 0a50 20 0 1 0-100 0z" />
        <ellipse cx="1589" cy="314" rx="44" ry="17" fill="url(#cubeShadow)" stroke="none" />
        <path d="M1557 262l36-9 33 10-37 10z" fill="#f0f0f0" stroke="#999" />
        <path d="M1557 262l32 11v49l-31-15z" fill="#e4e4e4" stroke="#999" />
        <path d="M1589 273l37-10-2 45-35 14z" fill="#ececec" stroke="#999" />
        <path d="M1583 262l12 2M1586 259l11 3M1590 260l-2 3" fill="none" stroke="#aaa" strokeWidth="1.500" />
        <path d="M1532 329l10-5 8 3-8 5zM1623 330l16-3 6 6-10 4zM1548 294l7-3 3 4-6 2zM1626 293l9 0 4 5-10 1z" fill="#ccc" stroke="#999" strokeWidth=".8" />
      </g>
      <text x="1561" y="289" fontSize="8" fontWeight="700" fill="#888" fontFamily="Liberation Sans Narrow, Liberation Sans" transform="rotate(18 1561 289)">FRONT</text>
      <text x="1596" y="298" fontSize="8" fontWeight="700" fill="#888" fontFamily="Liberation Sans Narrow, Liberation Sans" transform="rotate(-14 1596 298)">RIGHT</text>
    </svg>
  );
}

function NavBar() {
  return (
    <div className="absolute right-[-4px] top-[167px] flex h-[118px] w-9 flex-col items-center rounded-md border-2 border-[#0006] bg-[#eeec] opacity-80">
      <button aria-label="Close" className="mr-[2px] mt-[2px] self-end"><Svg s={8}><circle cx="4" cy="4" r="4" fill="#aaa" stroke="none" /><path d="M2.500 2.500l3 3M5.500 2.500l-3 3" stroke="#fff" /></Svg></button>
      <button aria-label="Steering wheel" className="mt-[9px]">
        <Svg s={22}><path d="M11 1h9q1 0 1 1v9A10 10 0 1 1 11 1z" fill="#e8e8e8" stroke="#888" /><circle cx="11" cy="11" r="5.500" fill="#f4f4f4" stroke="#888" /><path d="M15 15l3 3M7 15l-3 3" stroke="#888" /></Svg>
      </button>
      <Caret cls="mt-[7px] opacity-60" />
      <span className="mt-1 h-px w-[26px] bg-[#aaa]" />
      <button aria-label="Zoom region" className="mt-2">
        <Svg><path d="M.5.5h10v10H.5z" fill="#a9cf97" stroke="#6fa35c" /><circle cx="10.500" cy="10" r="3.500" fill="#eee" stroke="#888" strokeWidth="1.500" /><path d="M13 12.500l3 3" stroke="#888" strokeWidth="2" /></Svg>
      </button>
      <Caret cls="mt-[9px] opacity-60" />
      <button aria-label="Options" className="mb-[2px] mr-[2px] mt-auto self-end"><Svg s={8}><circle cx="4" cy="4" r="3.500" fill="#ddd" stroke="#999" /><path d="M2 4h4" stroke="#777" /></Svg></button>
    </div>
  );
}

const redX = <path d="M9 8l6 6M15 8l-6 6" stroke="#c8201c" strokeWidth="2.200" />;
const bulb = <><circle cx="12.500" cy="7.500" r="3" fill="#bfe0fb" stroke="#1f74c0" /><path d="M12.500 11v3" stroke="#1f74c0" strokeWidth="2" /></>;
const cube = <path d="M2 6l4-3.500h8V10l-3.500 4H2zM2 6h8.500v8M10.500 6L14 2.500" />;

const VIEW_ICONS: [string, ReactNode][] = [
  ['Detail level', <><path d="M.5 2.500h15v11H.5z" fill="#fff" /><path d="M1 6l4-3M1 10l8-7M2 13L13 3M6 13l9-8M10 13l5-4M1 9l4 4M1 5l8 8M3 3l10 10M7 3l8 7M11 3l4 3" strokeWidth=".7" /></>],
  ['Visual style', <g fill="#7cc0ef" stroke="#13568f"><path d="M1 6l4-3.500h10V10l-3.500 4H1z" /><path d="M1 6h10.500v8M11.500 6L15 2.500" /></g>],
  ['Sun path', <><circle cx="7" cy="7" r="3.500" fill="#ffe04a" stroke="#d98c10" /><path d="M7 0v2M0 7h2M2 2l1.500 1.500M12 2l-1.500 1.500M2 12l1.500-1.500" stroke="#d98c10" strokeWidth="1.500" />{redX}</>],
  ['Shadows', <><circle cx="7" cy="6" r="4" fill="#cfe6fa" stroke="#1f74c0" /><path d="M3 13h7" stroke="#777" strokeWidth="2.500" />{redX}</>],
  ['Rendering', <><path d="M1 5q0 8 6 8 3 0 3-3V5zM1 5L0 3M10 5l2-3M4 5V2h4v3" fill="#ddd" />{bulb}</>],
  ['Crop view', <><path d="M3 1v12h5M1 4h12v4M5 13V6h6" stroke="#1f5fa0" strokeWidth="1.500" />{redX}</>],
  ['Show crop region', <><path d="M3 1v13M1 12h7M4 5h6M5 12V6h4" stroke="#1f5fa0" strokeWidth="1.500" />{bulb}</>],
  ['Lock view', <><path d="M1 8l6-6 7 5M3 8v6h5M5 14v-4h2" fill="#ddd" /><path d="M9 10h6v5H9zM10 10V8.500q2-2 4 0V10" fill="#6fae8c" /></>],
  ['Hide isolate', <><path d="M.5 3.500h15v10H.5z" fill="#8fc6ee" stroke="#13466f" /><path d="M2 5q3 5 6 1 3 4 6-1M4 8l2 5h5l2-5" fill="#fff" /></>],
  ['Reveal hidden', <><circle cx="8" cy="6" r="2.800" fill="#bfe0fb" stroke="#1f74c0" /><path d="M8 9.500v4" stroke="#1f74c0" strokeWidth="2" /></>],
  ['View properties', <><path d="M2 4h11v6M2 4v9h6M4 2v2M7 2v2M10 2v2M4 13v2M1 6h1M1 10h1" strokeWidth="1.500" /><circle cx="11.500" cy="12" r="2.500" fill="#fff" strokeWidth="1.500" /></>],
  ['Analytical model', <><path d="M1 6h9M2 14V4M6 14V4M9 14V9M1 9h8" stroke="#b32a22" strokeWidth="1.300" /><path d="M2 3h10M4 1h9" />{bulb}</>],
  ['Displacement', <>{cube}<path d="M1 8h6v5" strokeDasharray="2 1" /></>],
  ['Constraints', <><path d="M1 3h14M1 1v4M15 1v4M1 8v6M3 13h5" strokeDasharray="3 1" /><path d="M9 10h6v5H9zM10 10V8.500q2-2 4 0V10" fill="#aaa" /></>],
];

function ViewArea() {
  return (
    <main className="flex min-w-0 flex-1 flex-col">
      <div className="flex h-5 shrink-0 items-center bg-[#cbcbcb]">
        <div className="flex h-full w-[127px] items-center bg-white pl-[5px] pr-px text-[11px] text-black">
          <Svg s={16}>{houseSmall}</Svg>
          <span className="ml-2 flex-1">{'{3D}'}</span>
          <CloseX />
        </div>
        <button aria-label="Tab list" className="ml-auto mr-[6px] flex flex-col items-center gap-[2px]"><span className="h-px w-2 bg-[#333]" /><Caret cls="w-2" /></button>
      </div>
      <div className="flex flex-1 bg-white pl-[2px] pt-[2px]">
        <div className="relative flex-1 border-4 border-[#00f3ff] bg-white">
          <ModelCanvas />
          <p className="absolute -left-1 -top-1 h-6 w-[173px] whitespace-nowrap bg-[#00f3ff] pl-[5px] font-['Liberation_Sans',sans-serif] text-[15px] font-bold leading-6 text-black">Temporary Hide/Isolate</p>
          <NavBar />
        </div>
        <div className="mr-[3px] flex w-4 flex-col items-center justify-between bg-[#f0f0f0] py-1">
          <Chevron dir="up" />
          <span className="h-[17px] w-full bg-[#cdcdcd]" />
          <Chevron dir="down" />
        </div>
      </div>
      <div className="flex h-[19px] shrink-0 items-center border-b-2 border-white bg-[#f0f0f0] pb-px text-[11px] text-black">
        <button className="ml-[26px] w-[55px] text-left">1 : 100</button>
        {VIEW_ICONS.map(([label, icon]) => <button key={label} aria-label={label} className="w-[21px]"><Svg>{icon}</Svg></button>)}
        <span className="ml-[2px] flex"><Chevron dir="left" /></span>
        <div className="flex flex-1 justify-center"><span className="h-[15px] w-[17px] bg-[#cdcdcd]" /></div>
        <Chevron dir="right" />
        <svg viewBox="0 0 10 10" className="ml-2 mr-[6px] w-[9px] h-[9px] self-end" fill="#bbb"><path d="M7 1h2v2H7zM4 4h2v2H4zM7 4h2v2H7zM1 7h2v2H1zM4 7h2v2H4zM7 7h2v2H7z" /></svg>
      </div>
    </main>
  );
}

// ---------- right side ----------

interface Prop { label: string; value?: string; kind?: 'header' | 'edit' | 'check' | 'input' | 'off'; suffix?: string }

const PROPS: Prop[] = [
  { label: 'Graphics', kind: 'header' },
  { label: 'View Scale', value: '1 : 100', kind: 'input' },
  { label: 'Scale Value', suffix: '1:', value: '100', kind: 'off' },
  { label: 'Detail Level', value: 'Fine' },
  { label: 'Parts Visibility', value: 'Show Original' },
  { label: 'Visibility/Grap...', kind: 'edit' },
  { label: 'Graphic Displ...', kind: 'edit' },
  { label: 'Discipline', value: 'Coordination' },
  { label: 'Show Hidden ...', value: 'By Discipline' },
  { label: 'Default Analy...', value: 'None' },
  { label: 'Sun Path', kind: 'check' },
  { label: 'Extents', kind: 'header' },
  { label: 'Crop View', kind: 'check' },
  { label: 'Crop Region ...', kind: 'check' },
  { label: 'Annotation Cr...', kind: 'check' },
  { label: 'Far Clip Active', kind: 'check' },
  { label: 'Far Clip Offset', value: '304800.000', kind: 'off' },
];

function PropValue({ p }: { p: Prop }) {
  if (p.kind === 'edit') return <button aria-label={`${p.label} Edit...`} className="ml-px block h-4 w-[91px] border-b-2 border-r-2 border-[#a5a5a5] bg-[#e1e1e1] leading-[14px]">Edit...</button>;
  if (p.kind === 'check') return <input type="checkbox" aria-label={p.label} className="ml-[2px] mt-[2px] block h-[13px] w-[13px] appearance-none border border-[#333] bg-white" />;
  if (p.kind === 'input') return <input aria-label={p.label} defaultValue={p.value} className="block h-4 w-[92px] border border-black bg-white pl-1 text-[11px] text-black outline-none" />;
  return <span className="block pl-[2px] pb-[2px] leading-[15px]">{p.value}</span>;
}

function Properties() {
  return (
    <section className="flex h-[443px] shrink-0 flex-col border-b-2 border-[#cbcbcb] pl-[2px]">
      <div className="flex h-5 shrink-0 items-center justify-between pl-[2px] text-[#444]"><h2>Properties</h2><CloseX /></div>
      <div className="flex h-[72px] shrink-0 items-center border border-[#ccc] bg-[#f0f0f0] p-[2px]">
        <div className="flex h-[66px] w-[66px] items-center justify-center border border-[#ccc]">
          <Svg s={32}>
            <path d="M5 14v10l9 5 13-7V12L20 3z" fill="#f0f1f4" /><path d="M14 16v13L28 22V11z" fill="#b4bac6" />
            <path d="M2 14L10 5l10-3 9 10-15 6-6-9-5 6z" fill="#d5d8df" strokeWidth="1.500" /><path d="M8 26v-7l4 1.500V28z" fill={D} />
          </Svg>
        </div>
        <span className="ml-1 flex-1 text-[#333]">3D View</span>
        <Caret cls="w-[7px]" />
      </div>
      <div className="flex h-[25px] shrink-0 items-center">
        <div className="relative">
          <select aria-label="View" className="h-[23px] w-[134px] appearance-none border border-[#aaa] bg-[#e1e1e1] pl-[3px] text-[11px] text-[#222]"><option>3D View: {'{3D}'}</option></select>
          <span className="pointer-events-none absolute right-1 top-[7px]"><Chevron dir="down" w={1} /></span>
        </div>
        <button className="ml-[6px] flex items-center gap-[5px] whitespace-nowrap pb-[2px] text-[#222]">
          <Svg><path d="M1 2.500l1-1h5v6H1zM9 2.500l1-1h5V8M1 10l1-1h5v6H1z" fill="#eee" /><path d="M9.500 7.500h6v8h-6z" fill="#fff" stroke="#1f5fa0" /><path d="M11 10h3M11 13h1M13 13h1" stroke="#1f5fa0" strokeWidth="1.500" /></Svg>
          Edit Type
        </button>
      </div>
      <div className="flex min-h-0 flex-1">
        <div className="flex-1 overflow-hidden bg-white">
          <table className="w-full table-fixed border-collapse text-black">
            <colgroup><col /><col className="w-[93px]" /><col className="w-3" /></colgroup>
            <tbody>
              {PROPS.map(p => p.kind === 'header' ? (
                <tr key={p.label} className="h-[18px] bg-[#dcdcdc]">
                  <th colSpan={3} className="p-0 pl-[2px] pr-[6px] text-left font-normal leading-4">
                    <span className="flex items-center justify-between">{p.label}
                      <svg viewBox="0 0 8 10" className="w-[7px] h-[9px]" fill="none" stroke="#111" strokeWidth="1.400"><path d="M1 4.500l3-3 3 3M1 9l3-3 3 3" /></svg>
                    </span>
                  </th>
                </tr>
              ) : (
                <tr key={p.label} className={clsx('h-[18px] border-b border-dotted border-[#888]', p.kind === 'off' && 'text-[#808080]')}>
                  <td className="whitespace-nowrap p-0 pb-[2px] pl-[7px] leading-[15px]"><span className="flex justify-between pr-[5px]"><span>{p.label}</span>{p.suffix && <span>{p.suffix}</span>}</span></td>
                  <td className="whitespace-nowrap border-x border-dotted border-[#888] p-0 leading-[15px]"><PropValue p={p} /></td>
                  <td className="border-r border-dotted border-[#888] p-0" />
                </tr>
              ))}
            </tbody>
          </table>
        </div>
        <div className="ml-px flex w-[15px] flex-col items-center bg-[#f0f0f0] py-1">
          <Chevron dir="up" /><span className="mt-1 h-[111px] w-full bg-[#cdcdcd]" /><span className="mt-auto"><Chevron dir="down" /></span>
        </div>
      </div>
      <div className="flex h-[27px] shrink-0 items-center justify-between pb-px pl-[2px] pr-[2px]">
        <a href="#help" className="text-[#0066cc] underline">Properties help</a>
        <button disabled className="h-[21px] w-[73px] border border-[#bfbfbf] bg-[#ccc] text-[#888]">Apply</button>
      </div>
    </section>
  );
}

type Link = 'line' | 'plus' | 'minus' | 'tee' | 'elbow';

// One connector cell of the tree
function TreeCell({ kind, wide }: { kind: Link; wide?: boolean }) {
  const w = wide ? (kind === 'elbow' ? 23 : 26) : 20;
  return (
    <svg width={w} height="18" viewBox={`0 0 ${w} 18`} className="shrink-0" fill="none" stroke="#999" strokeDasharray="1 1" aria-hidden="true">
      <path d={kind === 'elbow' ? 'M8.500 0v10' : 'M8.500 0v18'} />
      {kind !== 'line' && <path d={`M9 10.500h${w - 12}`} />}
      {(kind === 'plus' || kind === 'minus') && (
        <g strokeDasharray="none">
          <rect x="4.500" y="6.500" width="8" height="8" rx="1" fill="#f4f4f4" stroke="#919191" />
          <path d="M6.500 10.500h4" stroke="#2a4c9b" />{kind === 'plus' && <path d="M8.500 8.500v4" stroke="#2a4c9b" />}
        </g>
      )}
    </svg>
  );
}

const TREE_TOP: [string, Link, ReactNode][] = [
  ['Schedules/Quantities (all)', 'tee', <><path d="M.5 2.500h15v11H.5z" fill="#fff" /><path d="M.5 3.500h15" strokeWidth="3" /><path d="M1 8h14M1 11h14M5 4v9M10 4v9" /></>],
  ['Sheets (all)', 'tee', <><path d="M.5 2.500h11l4 3v8H.5z" fill="#fff" strokeWidth="1.500" /><path d="M3 6h6v5H3zM6 11V8H3M10 8v4h3M11 2v4h4" /></>],
  ['Families', 'minus', <><path d="M1.500 1.500h7v6h-7zM10.500 1.500h4v13h-13v-5h9z" fill="#f2f2f2" strokeWidth="1.500" /></>],
];

const FAMILIES = ['Analytical Links', 'Annotation Symbols', 'Cable Trays', 'Ceilings', 'Conduits', 'Curtain Panels', 'Curtain Systems', 'Curtain Wall Mullions', 'Detail Items', 'Doors', 'Duct Systems', 'Ducts', 'Flex Ducts', 'Flex Pipes', 'Floors', 'Generic Models'];

const GENERIC: [string, Link][] = [['ALU LOUVERS', 'plus'], ['Clash_Point', 'minus'], ['', 'elbow'], ['M_Opening-Door', 'plus']];

function ProjectBrowser() {
  return (
    <section className="flex min-h-0 flex-1 flex-col pl-[2px]">
      <div className="flex h-5 shrink-0 items-center justify-between pl-[2px] text-[#444]"><h2>Project Browser - arch_sample.rvt</h2><CloseX /></div>
      <div className="mb-[2px] flex min-h-0 flex-1">
        <ul className="flex-1 overflow-hidden whitespace-nowrap bg-white leading-[18px] text-black">
          {TREE_TOP.map(([label, kind, icon]) => (
            <li key={label} className="flex h-[18px]"><TreeCell kind={kind} /><Svg cls="mt-px">{icon}</Svg><span className="ml-[6px]">{label}</span></li>
          ))}
          {FAMILIES.map(f => (
            <li key={f} className="flex h-[18px]"><TreeCell kind="line" /><TreeCell kind={f === 'Generic Models' ? 'minus' : 'plus'} wide />{f}</li>
          ))}
          {GENERIC.map(([label, kind]) => (
            <li key={label} className="flex h-[18px]">
              <TreeCell kind="line" /><TreeCell kind="line" />
              {kind === 'elbow'
                ? <><TreeCell kind="line" /><TreeCell kind="elbow" wide /><span className="bg-[#e1e1e1] px-[3px]">Clash_Point</span></>
                : <><TreeCell kind={kind} wide />{label}</>}
            </li>
          ))}
        </ul>
        <div className="flex w-[15px] flex-col items-center bg-[#f0f0f0] py-1">
          <Chevron dir="up" /><span className="mt-[49px] h-[206px] w-full bg-[#cdcdcd]" /><span className="mt-auto"><Chevron dir="down" /></span>
        </div>
      </div>
    </section>
  );
}

// ---------- status bar ----------

const arrow = <path d="M8 5v9l2.500-2 1.500 3 1.500-.8-1.500-3h3z" fill="#fff" stroke="#333" />;
const smallX = <path d="M10 1l5 5M15 1l-5 5" stroke="#d01818" strokeWidth="2" />;

const SELECT_ICONS: [string, ReactNode][] = [
  ['Select links', <><path d="M1 2.500h5v4H1zM9 2.500h5v4H9zM4 4.500h7" stroke="#d69b12" strokeWidth="2" />{arrow}</>],
  ['Select underlay', <><path d="M1 8l7-6v6zM1 13h9M1 13l3-3h5" fill="#cfe6fa" stroke="#1f5fa0" strokeWidth="1.500" />{arrow}{smallX}</>],
  ['Select pinned', <><path d="M2 2h8v3H2zM3 5v4h6V5M1 9h10M6 9v5" fill="#f0925a" stroke="#9c4a1d" />{arrow}</>],
  ['Select by face', <><path d="M1 4l8-2v11l-8 2z" fill="#a9d8f5" stroke="#1f5fa0" />{arrow}{smallX}</>],
  ['Drag elements', <><path d="M6 0v11M0 5.500h12M4 2l2-2 2 2M4 9l2 2 2-2M2 3.500l-2 2 2 2" stroke="#222" strokeWidth="1.300" />{arrow}</>],
  ['Background processes', <circle cx="8" cy="8" r="5" stroke="#a2a2a2" strokeWidth="3" strokeDasharray="2.900 1.030" />],
];

function Combo({ label, value }: { label: string; value: string }) {
  return (
    <div className="relative">
      <select aria-label={label} className="block h-[17px] w-[204px] appearance-none bg-white pl-[2px] text-xs leading-[17px] text-[#888]"><option>{value}</option></select>
      <span className="pointer-events-none absolute right-0 top-0 flex h-[17px] w-[17px] items-center justify-center border-l border-[#eee]"><Chevron dir="down" color="#aaa" w={1} /></span>
    </div>
  );
}

function StatusBar() {
  return (
    <footer className="flex h-6 shrink-0 items-center bg-[#cbcbcb] text-[11px] text-black">
      <p className="w-[896px] pl-px font-['Noto_Sans',sans-serif]">Click to select, TAB for alternates, CTRL adds, SHIFT unselects.</p>
      <Svg><path d="M5 3l3-2 3 2v5H5z" fill="#7fc47f" stroke="#1e7a2e" /><path d="M1 8l3-2 4 2v6l-3 1.500L1 14z" fill="#a9d8f5" stroke="#1f5fa0" /><path d="M12 8v7M10 5v3q2 2 4 0V5" stroke="#1f4f80" strokeWidth="1.500" /></Svg>
      <div className="ml-[9px]"><Combo label="Workset" value="" /></div>
      <Svg cls="ml-2"><path d="M5 2h10v4H9l-4 4zM1 15l5-6 3 2-3 4z" fill="#c4c4c4" stroke="#888" /></Svg>
      <span className="ml-[5px] w-8">:0</span>
      <Svg><path d="M.5 1.500h15v13H.5z" fill="#eee" strokeWidth="1.500" /><path d="M.5 3h15" strokeWidth="2" /><path d="M3 7h2M7 7h5M5 10h2M8 10h5M5 12.500h2M8 12.500h5" /></Svg>
      <Svg cls="ml-[10px]"><path d="M1 1h14v14H1z" fill="#aaa" stroke="#999" /><path d="M3 8h5M6 5l4 3-4 3" stroke="#eee" /></Svg>
      <div className="ml-2"><Combo label="Design option" value="Main Model" /></div>
      <div className="ml-auto flex items-center gap-[10px]">
        {SELECT_ICONS.map(([label, icon]) => <button key={label} aria-label={label}><Svg>{icon}</Svg></button>)}
      </div>
      <button className="ml-[6px] mr-[72px] flex items-center" aria-label="Filter :0"><Svg><path d="M1 2.500h14L10 9v6l-3-2V9z" fill="#c6d2de" strokeWidth="1.200" /></Svg>:0</button>
    </footer>
  );
}

export default function App() {
  return (
    <div className="flex h-screen flex-col overflow-hidden bg-[#eee] font-['Open_Sans',sans-serif]">
      <svg className="absolute h-0 w-0" aria-hidden="true">
        <defs>
          <linearGradient id="steel" x1="0" y1="0" x2="1" y2="1"><stop offset="0" stopColor="#fff" /><stop offset="1" stopColor="#b9bec9" /></linearGradient>
          <linearGradient id="steelh"><stop offset="0" stopColor="#b9bec9" /><stop offset=".4" stopColor="#fff" /><stop offset="1" stopColor="#a5abb8" /></linearGradient>
        </defs>
      </svg>
      <TitleBar />
      <Ribbon />
      <div className="flex min-h-0 flex-1">
        <ClashNavigator />
        <ViewArea />
        <aside className="flex w-[220px] shrink-0 flex-col border-l-2 border-[#cbcbcb] bg-[#eee] text-[11px]">
          <Properties />
          <ProjectBrowser />
        </aside>
      </div>
      <StatusBar />
    </div>
  );
}
